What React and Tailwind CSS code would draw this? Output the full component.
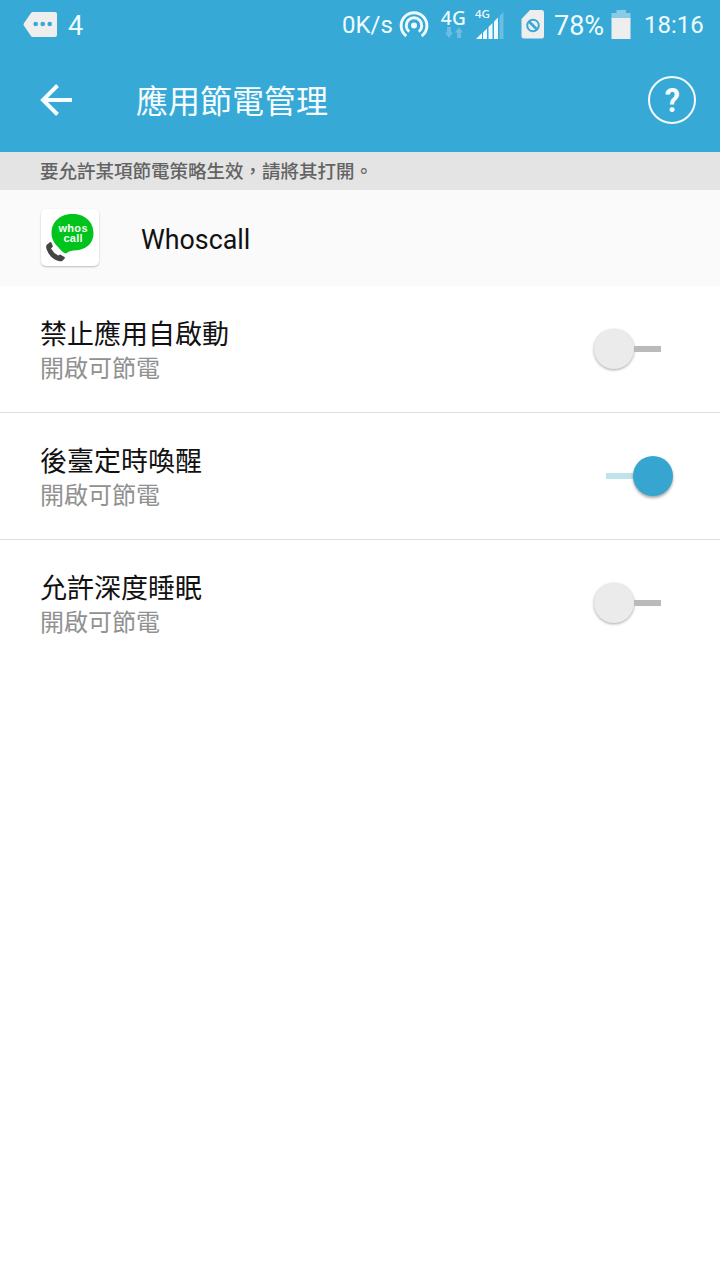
import { useState } from 'react'

const settings = [
  { id: 'autostart', title: '禁止應用自啟動', enabled: false },
  { id: 'wakeup', title: '後臺定時喚醒', enabled: true },
  { id: 'sleep', title: '允許深度睡眠', enabled: false },
]

const MessageIcon = () => (
  <svg className="ml-[23px] shrink-0" width="35" height="28" viewBox="0 0 35 28">
    <path d="M10 1H32Q34 1 34 3V24Q34 26 32 26H10Q8.600 26 7.800 24.800L.8 14.500Q.1 13.500 .8 12.500L7.800 2.200Q8.600 1 10 1Z" fill="#eeeeee" />
    <g fill="#37a9d7">
      <circle cx="12.700" cy="13" r="2.300" />
      <circle cx="19.700" cy="13" r="2.300" />
      <circle cx="26.700" cy="13" r="2.300" />
    </g>
  </svg>
)

const HotspotIcon = () => (
  <svg className="ml-[6px] shrink-0" width="30" height="30" viewBox="0 0 30 30" fill="none" stroke="#effcff" strokeWidth="2.900">
    <path d="M7.300 26A12.900 12.900 0 1 1 22.700 26" />
    <path d="M10.200 21.700A7.800 7.800 0 1 1 19.800 21.700" />
    <circle cx="15" cy="15.500" r="3" fill="#effcff" stroke="none" />
  </svg>
)

const DataIcon = () => (
  <div className="ml-[11px] flex h-[30px] w-[27px] shrink-0 flex-col items-center text-[#effcff]">
    <span className="text-[19px] font-medium leading-[16px] tracking-[0.4px]" style={{ fontFamily: 'Noto Sans, sans-serif' }}>4G</span>
    <svg className="mt-px shrink-0" width="18" height="12" viewBox="0 0 18 12" fill="#6bbde1">
      <path d="M2 0H6V5.500H8L4 11 0 5.500H2Z" />
      <path d="M12 11H16V5.500H18L14 0 10 5.500H12Z" />
    </svg>
  </div>
)

const SignalIcon = () => (
  <div className="relative ml-[8px] h-8 w-[30px] shrink-0">
    <span className="absolute left-0 -top-[3px] text-[11.5px] font-medium leading-4 text-[#effcff]" style={{ fontFamily: 'Noto Sans, sans-serif' }}>4G</span>
    <svg width="30" height="32" viewBox="0 0 30 32">
      <g fill="#effcff">
        <path d="M1 30L7 24V30Z" />
        <path d="M8 23.500L12 19.500V30H8Z" />
        <path d="M13.500 18L17.500 14V30H13.500Z" />
        <path d="M19 12.500L23 8.500V30H19Z" />
      </g>
      <path d="M24.500 7L28.500 3V30H24.500Z" fill="#6bbde1" />
    </svg>
  </div>
)

const SimIcon = () => (
  <svg className="ml-[16px] shrink-0" width="24" height="30" viewBox="0 0 24 30">
    <path d="M9 0H21Q23 0 23 2.500V26Q23 28.500 21 28.500H3Q.5 28.500 .5 26V9Z" fill="#eeeeee" />
    <circle cx="12" cy="15.500" r="5.800" fill="none" stroke="#37a9d7" strokeWidth="2" />
    <path d="M8 11.500L16 19.500" stroke="#37a9d7" strokeWidth="2.600" />
  </svg>
)

const BatteryIcon = () => (
  <svg className="ml-[6px] shrink-0" width="20" height="30" viewBox="0 0 20 30">
    <path d="M5.500 0H15V3H19.500V9H.5V3H5.500Z" fill="#8acce8" />
    <path d="M.5 8H19.500V29H.5Z" fill="#eeeeee" />
  </svg>
)

const StatusBar = () => (
  <div className="flex h-12 items-center pt-0.5 text-[#effcff]">
    <MessageIcon />
    <span className="ml-[10px] w-[20px] pt-0.5 text-[27px] leading-none">4</span>
    <span className="ml-[254px] w-[51px] whitespace-nowrap text-[24px] leading-none">0K/s</span>
    <HotspotIcon />
    <DataIcon />
    <SignalIcon />
    <SimIcon />
    <span className="ml-[9px] w-[51px] whitespace-nowrap pt-0.5 text-[27px] leading-none">78%</span>
    <BatteryIcon />
    <span className="ml-[13px] whitespace-nowrap text-[24px] leading-none">18:16</span>
  </div>
)

const AppBar = () => (
  <div className="flex h-[104px] items-center pl-10 pr-6 text-[#f7fdff]">
    <button aria-label="返回">
      <svg width="33" height="34" viewBox="0 0 33 34" fill="none" stroke="currentColor" strokeWidth="4">
        <path d="M32 17H3M17.500 2.500L3 17L17.500 31.500" />
      </svg>
    </button>
    <h1 className="ml-[63px] flex-1 pt-1 text-[32px] leading-10">應用節電管理</h1>
    <button className="flex size-12 items-center justify-center rounded-full border-2 border-current text-[34px] font-bold leading-none">
      <span className="scale-x-90">?</span>
    </button>
  </div>
)

const WhoscallIcon = () => (
  <svg className="mb-0.5 shrink-0 rounded-[5px] bg-white shadow-[0_1px_2px_rgba(0,0,0,0.25)]" width="58" height="57" viewBox="0 0 58 57">
    <path d="M31.500 5C43.500 5 52.500 12.500 52.500 24C52.500 34.500 45 41.500 32 41.500L28 42.500L25 44.500C23 44.500 19.500 41 17.500 38.500C13 34 10.500 30 10.500 24C10.500 12.500 19.500 5 31.500 5Z" fill="#00c31c" />
    <g fill="#f4fff4" fontFamily="Liberation Sans, sans-serif" fontWeight="bold" textAnchor="middle">
      <text x="32" y="22.500" fontSize="11" textLength="29">whos</text>
      <text x="32" y="32.500" fontSize="11" textLength="19">call</text>
    </g>
    <path d="M6 35.500L9 33.200Q10 32.800 10.500 33.800L11.800 37Q12 38 11 38.600L10 39.400Q12.500 44 17.300 46.600L18.500 45.800Q19.300 45.300 20 45.900L23.500 48Q24.200 48.700 23.700 49.500L21.500 51.700Q20.500 52.500 18.500 52.200Q9 50 5.500 40Q4.600 36.800 6 35.500Z" fill="#444444" />
  </svg>
)

const Switch = ({ checked, onChange, label }) => (
  <button
    role="switch"
    aria-checked={checked}
    aria-label={label}
    onClick={onChange}
    className={checked ? 'flex w-[67px] items-center' : 'mr-3 flex w-[67px] items-center'}
  >
    {checked && <span className="h-1.5 flex-1 bg-[#bfe2ed]" />}
    <span
      className={
        checked
          ? 'size-10 rounded-full bg-[#36a6d1] shadow-[0_2px_3px_rgba(0,0,0,0.35)]'
          : 'size-10 rounded-full bg-[#ebebeb] shadow-[0_1px_3px_rgba(0,0,0,0.35)]'
      }
    />
    {!checked && <span className="h-1.5 flex-1 bg-[#bababa]" />}
  </button>
)

const App = () => {
  const [items, setItems] = useState(settings)

  const toggle = (id) => {
    setItems(items.map((item) => (item.id === id ? { ...item, enabled: !item.enabled } : item)))
  }

  return (
    <div className="min-h-screen w-full bg-white" lang="zh-Hant" style={{ fontFamily: 'Roboto, "Noto Sans CJK TC", sans-serif' }}>
      <header className="bg-[#37a9d7]">
        <StatusBar />
        <AppBar />
      </header>

      <p className="flex h-[38px] items-center bg-[#e4e4e4] pl-10 pt-[3px] text-[18.5px] font-medium text-[#636363]">
        要允許某項節電策略生效，請將其打開。
      </p>

      <div className="flex h-24 items-center bg-[#fafafa] pl-[41px]">
        <WhoscallIcon />
        <span className="ml-[42px] pt-[3px] text-[26.8px] leading-8 text-[#111111]">Whoscall</span>
      </div>

      <ul>
        {items.map((item) => (
          <li key={item.id} className="flex h-[127px] items-center justify-between border-b border-[#dddddd] pl-10 pr-[47px] last:border-transparent">
            <div className="pt-[3px]">
              <h2 className="text-[27px] leading-9 text-[#111111]">{item.title}</h2>
              <p className="text-[24px] leading-8 text-[#919191]">開啟可節電</p>
            </div>
            <Switch checked={item.enabled} onChange={() => toggle(item.id)} label={item.title} />
          </li>
        ))}
      </ul>
    </div>
  )
}

export default App
